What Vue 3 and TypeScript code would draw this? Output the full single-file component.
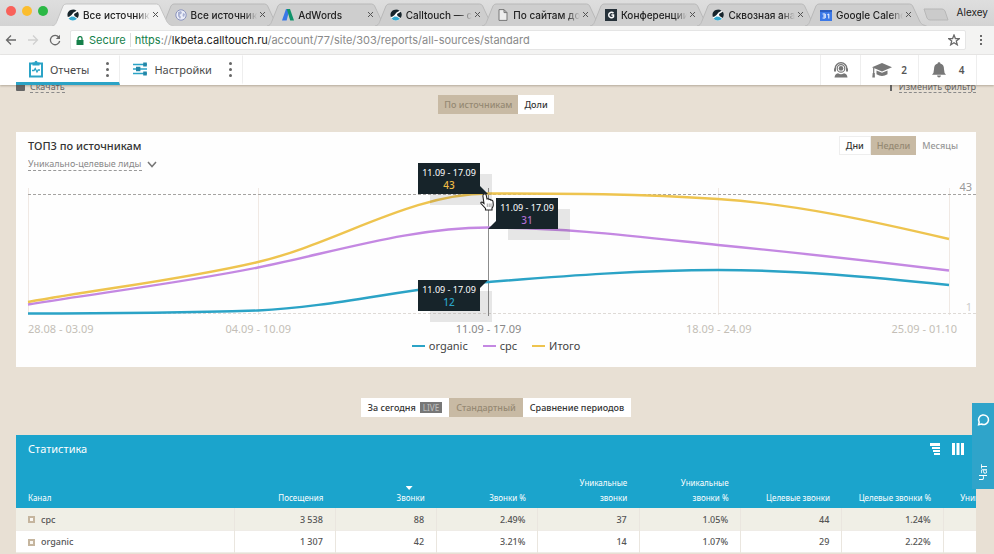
<script setup lang="ts">
import { ref } from 'vue'

interface BrowserTab { title: string; icon: string }
interface Column { lines: string[]; sorted?: boolean }
interface Row { name: string; values: string[] }
interface Series { name: string; color: string; path: string }

const tabs: BrowserTab[] = [
  { title: 'Все источники', icon: 'calltouch' },
  { title: 'Все источники', icon: 'globe' },
  { title: 'AdWords', icon: 'adwords' },
  { title: 'Calltouch — се', icon: 'calltouch' },
  { title: 'По сайтам дом', icon: 'page' },
  { title: 'Конференции', icon: 'conf' },
  { title: 'Сквозная анал', icon: 'calltouch' },
  { title: 'Google Calend', icon: 'calendar' },
]

const series: Series[] = [
  { name: 'organic', color: '#2ba3c6', path: 'M12 133.5C89 133.5 165 133 242 130.5C319 127 395 107 472 102C549 96 625 90 702 90C779 90 856 97 933 105' },
  { name: 'cpc', color: '#c488e2', path: 'M12 124.5C89 112 165 103 242 87.5C319 72 395 47.5 472 47.5C549 47.5 625 57 702 65C779 72.5 856 81 933 90.5' },
  { name: 'Итого', color: '#eec44f', path: 'M12 122C89 108 165 100 242 82C319 64 395 13.5 472 13.5C549 13.5 625 13.5 702 19C779 24 856 41 933 59' },
]
const gridX: number[] = [12, 242, 702, 933]
const weeks: string[] = ['28.08 - 03.09', '04.09 - 10.09', '11.09 - 17.09', '18.09 - 24.09', '25.09 - 01.10']

const columns: Column[] = [
  { lines: ['Посещения'] },
  { lines: ['Звонки'], sorted: true },
  { lines: ['Звонки %'] },
  { lines: ['Уникальные', 'звонки'] },
  { lines: ['Уникальные', 'звонки %'] },
  { lines: ['Целевые звонки'] },
  { lines: ['Целевые звонки %'] },
  { lines: ['Уникальные'] },
]
const rows: Row[] = [
  { name: 'cpc', values: ['3 538', '88', '2.49%', '37', '1.05%', '44', '1.24%', ''] },
  { name: 'organic', values: ['1 307', '42', '3.21%', '14', '1.07%', '29', '2.22%', ''] },
]

const metric = ref('Уникально-целевые лиды')
</script>

<template>
  <div class="window">
    <header class="tabstrip">
      <div class="lights"><i class="red"></i><i class="amber"></i><i class="green"></i></div>
      <nav class="tabs" aria-label="Tabs">
        <div v-for="(tab, i) in tabs" :key="i" class="tab" :class="{ current: i === 0 }">
          <svg class="tab-shape" viewBox="0 0 122 23" preserveAspectRatio="none">
            <path d="M0 23C4 22 4 20 5 18L11 3Q12 1 14 1H105Q107 1 108 3L115 18C117 22 119 22 122 23" />
          </svg>
          <svg class="fav" viewBox="0 0 12 12">
            <g v-if="tab.icon === 'calltouch'">
              <circle cx="6" cy="6" r="5.6" fill="#fff" />
              <path d="M.4 6A5.6 5.6 0 0 1 9.6 1.8L6.5 3.6L4.5 6L2.6 7.6L.8 8Z" fill="#17242b" />
              <path d="M7 5L10.8 2.8A5.6 5.6 0 0 1 10.7 9L7.5 7Z" fill="#17242b" />
              <path d="M1.5 9.5L4.5 7.6L7 7.7L10 9.8A5.6 5.6 0 0 1 1.5 9.5Z" fill="#35a9cf" />
            </g>
            <g v-else-if="tab.icon === 'globe'">
              <circle cx="6" cy="6" r="5.2" fill="#eceef8" stroke="#8a93bd" />
              <path d="M3 3L6 2L7 4L4.5 6L6 8L5 10L3 7ZM8 4L10 5L9 8L7.5 7Z" fill="#a8b0d2" />
            </g>
            <g v-else-if="tab.icon === 'adwords'">
              <path d="M4 0H7.6L4.6 11.5H0Z" fill="#3b78e7" />
              <path d="M4.8 0H8L12 11.5H8.2Z" fill="#11936a" />
            </g>
            <path v-else-if="tab.icon === 'page'" d="M2 .6H7L10 3.6V11.4H2ZM7 .6V3.6H10" fill="#eee" stroke="#777" />
            <g v-else-if="tab.icon === 'conf'">
              <rect width="12" height="12" fill="#263139" />
              <path d="M8.5 4.3C7 2.4 3.7 3.3 3.7 6S7 9.6 8.5 7.7V6H6.4" fill="none" stroke="#fff" stroke-width="1.5" />
            </g>
            <g v-else>
              <rect y="1" width="12" height="11" fill="#3b78e7" />
              <path d="M0 1H12V3H0Z" fill="#2a5dc0" />
              <path d="M2.6 5H5.2V9H2.6M3.2 7H5.2M7.3 5.8L8.8 5V9.5" fill="none" stroke="#fff" />
            </g>
          </svg>
          <a href="#" class="tab-title">{{ tab.title }}</a>
          <button class="close" aria-label="Close tab">
            <svg viewBox="0 0 7 7"><path d="M1 1L6 6M6 1L1 6" /></svg>
          </button>
        </div>
      </nav>
      <button class="new-tab" aria-label="New tab">
        <svg viewBox="0 0 26 13"><path d="M1 1H19Q21 1 22 3L25 12H7Q5 12 4 10Z" /></svg>
      </button>
      <span class="user">Alexey</span>
    </header>

    <div class="toolbar">
      <button aria-label="Back"><svg viewBox="0 0 12 12"><path d="M11 6H1.5M6 1.5L1.5 6L6 10.5" /></svg></button>
      <button aria-label="Forward" class="off"><svg viewBox="0 0 12 12"><path d="M1 6H10.5M6 1.5L10.5 6L6 10.5" /></svg></button>
      <button aria-label="Reload"><svg viewBox="0 0 12 12"><path d="M9.8 3.1A4.7 4.7 0 1 0 10.7 7" /><path class="solid" d="M11 .8V5H6.8Z" /></svg></button>
      <div class="omnibox">
        <svg class="lock" viewBox="0 0 8 9"><path d="M.5 4H7.5V9H.5Z" fill="#15804a" /><path d="M2 4V2.6A2 2 0 0 1 6 2.6V4" fill="none" stroke="#15804a" /></svg>
        <span class="secure">Secure</span>
        <div class="url" role="textbox" aria-label="Address" contenteditable="true" spellcheck="false"><span class="scheme">https</span>://<span class="host">lkbeta.calltouch.ru</span>/account/77/site/303/reports/all-sources/standard</div>
        <button class="star" aria-label="Bookmark"><svg viewBox="0 0 12 12"><path d="M6 1L7.4 4.5L11.2 4.7L8.3 7.1L9.3 10.8L6 8.7L2.7 10.8L3.7 7.1L.8 4.7L4.6 4.5Z" /></svg></button>
      </div>
      <button class="menu" aria-label="Menu"><svg viewBox="0 0 12 12"><path class="solid" d="M5 1H7V3H5ZM5 5H7V7H5ZM5 9H7V11H5Z" /></svg></button>
    </div>

    <div class="appbar">
      <div class="nav-item active">
        <svg class="nav-icon" viewBox="0 0 16 18">
          <path d="M2 3.5H14V16.5H2Z" fill="none" stroke="#2ba3c6" stroke-width="2" />
          <path d="M4.5 2.5H6.5A1.5 1.8 0 0 1 9.5 2.5H11.5V5.5H4.5Z" fill="#2ba3c6" />
          <path d="M4 10.5H6L7.2 8.5L9 12L10.2 10H12" fill="none" stroke="#2ba3c6" stroke-width="1.3" />
        </svg>
        <a href="#">Отчеты</a>
        <button class="dots" aria-label="Отчеты: меню"><i></i><i></i><i></i></button>
      </div>
      <div class="nav-item">
        <svg class="nav-icon" viewBox="0 0 16 18">
          <path d="M1 4.5H15M1 9H15M1 13.5H15" stroke="#2ba3c6" stroke-width="1.4" />
          <path d="M11.2 2.5H14.8V6.5H11.2ZM4 6.8H8.4V11.2H4ZM11.2 11.5H14.8V15.5H11.2Z" fill="#2387a8" />
        </svg>
        <a href="#">Настройки</a>
        <button class="dots" aria-label="Настройки: меню"><i></i><i></i><i></i></button>
      </div>
      <div class="spacer"></div>
      <button class="tool support" aria-label="Поддержка">
        <svg viewBox="0 0 16 16">
          <path d="M2.2 7.5V6.4A5.8 5.6 0 0 1 13.8 6.4V7.5" fill="none" stroke="#777" stroke-width="1.5" />
          <path d="M1 6.5H3V9.5H1ZM13 6.5H15V9.5H13Z" fill="#777" />
          <circle cx="8" cy="6.4" r="3.8" fill="none" stroke="#777" stroke-width="1.2" />
          <circle cx="8" cy="6.4" r="2.3" fill="#777" />
          <path d="M1.5 15.5Q2 11.8 5 11.3Q8 13 11 11.3Q14 11.8 14.5 15.5Z" fill="#777" />
        </svg>
      </button>
      <button class="tool school">
        <svg class="wide" viewBox="0 0 20 16">
          <path d="M10 1L20 5.2L10 9.4L0 5.2Z" fill="#777" />
          <path d="M4.5 8.5L10 10.8L15.5 8.5V12.3Q10 15.5 4.5 12.3Z" fill="#777" />
          <path d="M1.7 6V12" stroke="#777" stroke-width="1.2" /><path d="M.7 11H2.7L2.9 15.5H.3Z" fill="#777" />
        </svg>2
      </button>
      <button class="tool bell">
        <svg viewBox="0 0 16 16"><path d="M8 .3A1.2 1.2 0 0 1 9.3 1.6Q13 2.5 13 7.2Q13 11 15 12.8H1Q3 11 3 7.2Q3 2.5 6.7 1.6A1.2 1.2 0 0 1 8 .3ZM6 13.6H10Q9.7 15.6 8 15.6Q6.3 15.6 6 13.6Z" fill="#777" /></svg>4
      </button>
    </div>

    <main class="page">
      <div class="page-links">
        <span class="download"><i class="box"></i><a href="#">Скачать</a></span>
        <span class="filter"><i class="funnel"></i><a href="#">Изменить фильтр</a></span>
      </div>

      <div class="segments view">
        <button class="on">По источникам</button><button>Доли</button>
      </div>

      <section class="card">
        <div class="card-head">
          <div>
            <h2>ТОП3 по источникам</h2>
            <label class="metric">
              <select v-model="metric" aria-label="Показатель"><option>Уникально-целевые лиды</option></select>
              <svg viewBox="0 0 10 7"><path d="M1 1L5 5.5L9 1" /></svg>
            </label>
          </div>
          <div class="segments period">
            <button>Дни</button><button class="on">Недели</button><button class="plain">Месяцы</button>
          </div>
        </div>

        <div class="plot">
          <svg class="lines" viewBox="0 0 960 140" preserveAspectRatio="none">
            <path v-for="x in gridX" :key="x" :d="`M${x}.5 8V135`" stroke="#f0e9e4" />
            <path d="M12 14.5H960" stroke="#a5a3a1" stroke-dasharray="3 2" />
            <path d="M12 133.5H960" stroke="#dedad6" stroke-dasharray="3 2" />
            <path d="M472.5 8V136" stroke="#8c8c8c" />
            <path v-for="s in series" :key="s.name" :d="s.path" :stroke="s.color" stroke-width="2.4" vector-effect="non-scaling-stroke" />
          </svg>
          <span class="limit top">43</span>
          <span class="limit bottom">1</span>
          <div class="tip total"><span>11.09 - 17.09</span><b>43</b></div>
          <div class="tip cpc"><span>11.09 - 17.09</span><b>31</b></div>
          <div class="tip organic"><span>11.09 - 17.09</span><b>12</b></div>
          <svg class="hand" viewBox="0 0 16 18">
            <path d="M5 1Q6.8 .4 7.2 2.2L8 6Q9.5 5.3 10 6.5Q11.5 6 12 7.2Q13.8 6.8 14 8.8L14.3 12Q14.2 14 13 15V17H6.5V15.5L2 10.5Q1.4 9 3 9L5 10.5L3.9 3Q3.8 1.5 5 1Z" fill="#fff" stroke="#222" stroke-width="1.1" />
            <path d="M8.3 10.5V14M10.2 10.5V14M12 10.5V14" stroke="#888" stroke-width=".8" />
          </svg>
        </div>

        <div class="weeks">
          <span v-for="(w, i) in weeks" :key="w" :class="{ now: i === 2 }">{{ w }}</span>
        </div>
        <div class="legend">
          <span v-for="s in series" :key="s.name"><i :style="{ background: s.color }"></i>{{ s.name }}</span>
        </div>
      </section>

      <div class="segments mode">
        <button>За сегодня <em>LIVE</em></button><button class="on">Стандартный</button><button>Сравнение периодов</button>
      </div>

      <section class="stats">
        <div class="stats-head">
          <h2>Статистика</h2>
          <div class="stats-tools">
            <button aria-label="Группировка"><svg viewBox="0 0 12 12"><path d="M0 0H10V3H0ZM2 4H10V6H2ZM3 7H10V9H3ZM4 10H10V12H4Z" /></svg></button>
            <button aria-label="Колонки"><svg viewBox="0 0 12 12"><path d="M0 0H3V12H0ZM4.5 0H7.5V12H4.5ZM9 0H12V12H9Z" /></svg></button>
          </div>
        </div>
        <table>
          <colgroup>
            <col class="c-name" /><col v-for="(c, i) in columns" :key="i" />
          </colgroup>
          <thead>
            <tr>
              <th scope="col" class="name">Канал</th>
              <th v-for="(c, i) in columns" :key="i" scope="col">
                <i v-if="c.sorted" class="sort"></i>
                <div v-for="line in c.lines" :key="line">{{ line }}</div>
              </th>
            </tr>
          </thead>
          <tbody>
            <tr v-for="row in rows" :key="row.name">
              <th scope="row" class="name"><div class="channel"><button class="expand" aria-label="Развернуть"></button>{{ row.name }}</div></th>
              <td v-for="(v, i) in row.values" :key="i">{{ v }}</td>
            </tr>
          </tbody>
        </table>
      </section>
    </main>

    <button class="chat">
      <svg viewBox="0 0 12 12"><path d="M1.5 10.8L2 8.4A4.6 4.4 0 1 1 4 10.2Z" /></svg>
      <span>Чат</span>
    </button>
  </div>
</template>

<style>
body { margin: 0; background: #e8e0d4; overflow: hidden; }
</style>

<style scoped>
* { box-sizing: border-box; }
.window { position: relative; height: 100vh; overflow: hidden; display: flex; flex-direction: column; font-family: "Noto Sans", "Open Sans", sans-serif; color: #4a4a4a; }
button { border: 0; padding: 0; margin: 0; background: none; font: inherit; color: inherit; display: flex; align-items: center; justify-content: center; }
a { color: inherit; text-decoration: none; }
h2 { margin: 0; font-weight: 500; }
svg { display: block; flex: none; }

.tabstrip { display: flex; height: 26px; flex: none; padding: 3px 6px 0 6px; background: linear-gradient(#dedede, #d3d3d3); font-family: Inter, Roboto, sans-serif; font-size: 10px; color: #222; }
.lights { display: flex; gap: 6px; width: 46px; flex: none; padding-top: 3px; }
.lights i { width: 10px; height: 10px; border-radius: 50%; }
.red { background: #f9615a; }
.amber { background: #fbbd2e; }
.green { background: #2bb845; }
.tabs { display: flex; flex: 1; min-width: 0; padding-right: 10px; }
.tab { position: relative; display: flex; align-items: center; flex: 1; min-width: 0; height: 23px; padding: 0 0 0 15px; }
.tab-shape { position: absolute; left: 0; top: 0; width: calc(100% + 14px); height: 23px; fill: #cecece; stroke: #b9b9b9; }
.tab.current { z-index: 1; }
.current .tab-shape { fill: #f3f3f3; stroke: #c4c4c4; }
.fav { position: relative; width: 12px; height: 12px; }
.tab-title { position: relative; flex: 1; min-width: 0; margin-left: 4px; overflow: hidden; white-space: nowrap; font-weight: 500; mask-image: linear-gradient(90deg, #000 80%, transparent 100%); }
.close { position: relative; margin: 0 1px 0 2px; width: 7px; }
.close svg { width: 7px; height: 7px; stroke: #555; }
.new-tab { width: 26px; }
.new-tab svg { width: 26px; height: 13px; fill: #cbcbcb; stroke: #b7b7b7; }
.user { padding: 3px 0 0 8px; }

.toolbar { display: flex; align-items: center; height: 29px; flex: none; padding: 0 7px 0 5px; background: #f3f3f2; border-bottom: 1px solid #e9e9e8; font-family: Inter, Roboto, sans-serif; font-size: 11px; }
.toolbar > button { width: 12px; margin-right: 10px; }
.toolbar svg { width: 12px; height: 12px; fill: none; stroke: #6a6a6a; stroke-width: 1.3; }
.toolbar .solid { fill: #6a6a6a; stroke: none; }
.toolbar .off { opacity: .25; }
.omnibox { display: flex; align-items: center; flex: 1; min-width: 0; height: 20px; padding: 0 5px; margin-left: -1px; background: #fff; border: 1px solid #e5e5e5; border-radius: 2px; }
.omnibox .lock { width: 8px; height: 9px; stroke: none; }
.secure { padding: 0 4px 0 5px; color: #15804a; border-right: 1px solid #ddd; }
.url { flex: 1; min-width: 0; padding-left: 4px; white-space: nowrap; color: #8a8a8a; outline: none; }
.scheme { color: #15804a; }
.host { color: #222; }
.toolbar .menu { margin: 0 0 0 9px; }

.appbar { position: relative; z-index: 2; display: flex; height: 30px; flex: none; padding: 0 17px 0 16px; background: #fff; box-shadow: 0 1px 2px rgba(80, 65, 45, .35); font-size: 11px; }
.nav-item { display: flex; align-items: center; padding: 0 9px 0 12px; border-right: 1px solid #eee; border-bottom: 3px solid transparent; border-top: 1px solid transparent; }
.nav-item.active { border-bottom-color: #2ba3c6; }
.nav-icon { width: 16px; height: 18px; margin-right: 6px; }
.dots { flex-direction: column; gap: 3px; width: 5px; margin-left: 16px; }
.dots i { width: 3px; height: 3px; border-radius: 50%; background: #666; }
.spacer { flex: 1; }
.tool { gap: 9px; border-left: 1px solid #eee; font-size: 10px; font-weight: 600; color: #555; }
.tool svg { width: 16px; height: 16px; }
.tool .wide { width: 20px; }
.support { width: 40px; }
.school { width: 58px; }
.bell { width: 59px; border-right: 1px solid #eee; gap: 12px; }

.page { flex: 1; min-height: 0; overflow: hidden; padding: 0 18px 0 16px; background: #e8e0d4; }
.page-links { display: flex; justify-content: space-between; height: 12px; margin-top: -3px; font-size: 9px; line-height: 10px; color: #666; }
.page-links span { display: flex; gap: 5px; }
.page-links a { height: 11px; border-bottom: 1px dashed #8a8a8a; }
.box { width: 9px; height: 9px; background: #666; border-radius: 1px; }
.funnel { width: 2px; height: 9px; margin-right: 2px; background: #666; }

.segments { display: flex; justify-content: center; font-size: 9px; line-height: 19px; font-weight: 500; color: #333; }
.segments button { height: 19px; padding: 0 6px; background: #fff; }
.segments .on { background: #c8baa4; color: #958973; }
.view { margin-top: 1px; }
.card { margin-top: 18px; padding: 4px 0 14px; background: #fefefe; }
.card-head { display: flex; justify-content: space-between; height: 44px; padding: 0 12px; }
.card-head h2 { padding-top: 2px; font-size: 11px; line-height: 16px; color: #333; }
.metric { display: flex; align-items: center; gap: 5px; margin-top: 4px; }
.metric select { appearance: none; border: 0; border-bottom: 1px dashed #999; padding: 0; height: 13px; background: none; font: inherit; font-size: 9px; line-height: 12px; color: #888; }
.metric svg { width: 10px; height: 7px; fill: none; stroke: #777; stroke-width: 1.5; }
.period button:first-child { border: 1px solid #eee; }
.segments .plain { color: #999; background: none; }

.plot { position: relative; height: 140px; }
.lines { width: 100%; height: 140px; fill: none; }
.limit { position: absolute; right: 4px; font-size: 11px; line-height: 14px; color: #999; }
.top { top: 0; }
.bottom { top: 120px; color: #ccc; }
.tip { position: absolute; width: 62px; height: 31px; padding-top: 3px; background: #17242a; box-shadow: 12px 11px 0 rgba(60, 60, 60, .12); color: #fff; font-size: 9px; line-height: 13px; text-align: center; white-space: nowrap; }
.tip span, .tip b { display: block; }
.tip b { font-size: 10px; line-height: 13px; font-weight: 500; }
.tip::after { content: ""; position: absolute; width: 8px; height: 8px; background: #17242a; }
.total, .organic { right: calc(50% + 16px); }
.total { top: -17px; }
.organic { top: 100px; }
.cpc { top: 18px; left: 50%; }
.total::after { left: 100%; bottom: 0; clip-path: polygon(0 0, 100% 100%, 0 100%); }
.organic::after { left: 100%; top: 0; clip-path: polygon(0 0, 100% 0, 0 100%); }
.cpc::after { right: 100%; bottom: 0; clip-path: polygon(100% 0, 100% 100%, 0 100%); }
.total b { color: #eebc45; }
.cpc b { color: #b06fd2; }
.organic b { color: #2ba3c6; }
.hand { position: absolute; left: calc(50% - 17px); top: 13px; width: 16px; height: 18px; }

.weeks { display: grid; grid-template-columns: 1fr 2fr 2fr 2fr 1fr; margin: 1px 27px 0 12px; font-size: 11px; line-height: 16px; color: #c4beb7; text-align: center; white-space: nowrap; }
.weeks span { min-width: 0; }
.weeks span:first-child { justify-self: start; }
.weeks span:last-child { justify-self: end; margin-right: -8px; }
.weeks .now { color: #888; }
.legend { display: flex; justify-content: center; gap: 15px; margin-top: 2px; font-size: 11px; line-height: 14px; height: 14px; color: #444; }
.legend span { display: flex; align-items: center; gap: 4px; }
.legend i { width: 13px; height: 2px; }

.mode { margin-top: 31px; }
.mode button { padding: 0 7px; }
.mode em { margin-left: 4px; padding: 0 3px; font-style: normal; font-size: 8px; line-height: 11px; background: #777; color: #bbb; }

.stats { position: relative; margin-top: 18px; overflow: hidden; background: #1ba4cc; color: #fff; }
.stats-head { display: flex; justify-content: space-between; height: 34px; padding: 6px 12px 0; }
.stats-head h2 { font-size: 11px; line-height: 16px; font-weight: 400; }
.stats-tools { display: flex; gap: 10px; height: 16px; }
.stats-tools svg { width: 12px; height: 12px; fill: #fff; }
table { width: 1029px; min-width: 107%; table-layout: fixed; border-collapse: collapse; font-size: 8px; }
.c-name { width: 218px; }
thead th { height: 39px; padding: 0 12px 3px; vertical-align: bottom; text-align: right; font-weight: 400; line-height: 15px; white-space: nowrap; }
thead th:last-child { text-align: left; padding-left: 17px; }
.sort { display: block; width: 7px; height: 4px; margin: 0 12px 0 auto; background: #fff; clip-path: polygon(0 0, 100% 0, 50% 100%); }
th.name { text-align: left; }
tbody { background: #fff; color: #555; font-size: 9px; }
tbody tr { border-bottom: 1px solid #efece7; }
tbody tr:first-child { background: #f0efe6; }
tbody th, tbody td { height: 22px; padding: 2px 12px 0; font-weight: 500; border-right: 1px solid #eae6df; line-height: 12px; }
tbody td { text-align: right; }
.channel { display: flex; align-items: center; gap: 6px; }
.expand { width: 7px; height: 7px; border: 2px solid #c5b59e; background: #faf7f2; }

.chat { position: absolute; z-index: 3; right: 0; top: 403px; flex-direction: column; justify-content: space-between; width: 22px; height: 86px; padding: 10px 0 8px; background: #2fa4ca; color: #fff; font-size: 10px; line-height: 14px; }
.chat svg { width: 13px; height: 13px; fill: none; stroke: #fff; stroke-width: 1.4; }
.chat span { writing-mode: vertical-rl; transform: rotate(180deg); }
</style>
